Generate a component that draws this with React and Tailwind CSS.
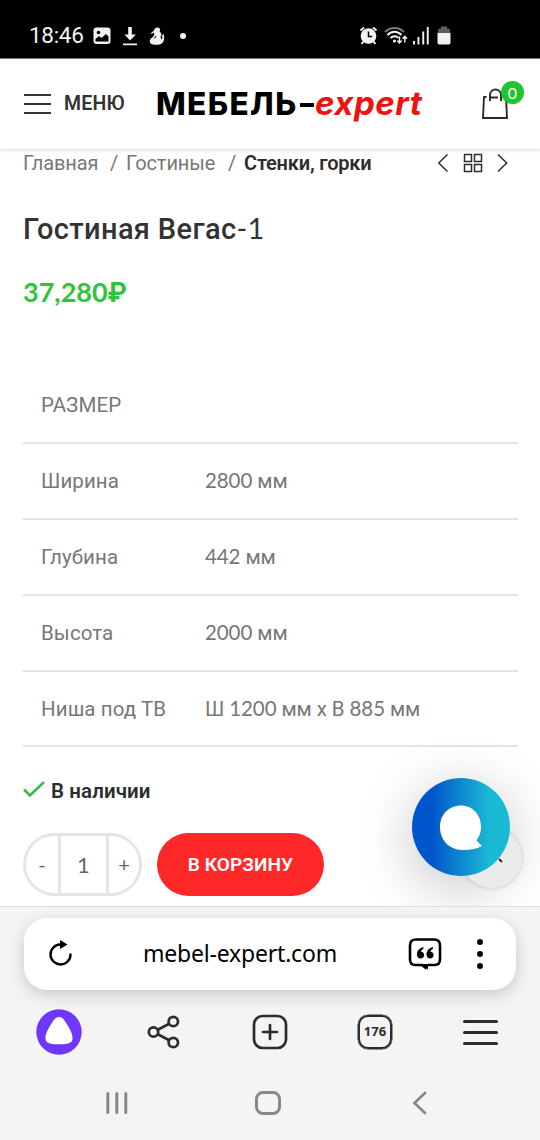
import React from 'react';

const specs = [
  { label: 'РАЗМЕР', value: '' },
  { label: 'Ширина', value: '2800 мм' },
  { label: 'Глубина', value: '442 мм' },
  { label: 'Высота', value: '2000 мм' },
  { label: 'Ниша под ТВ', value: 'Ш 1200 мм х В 885 мм' }
];

// Digits are set in Lato, Cyrillic in Roboto
const Mixed = ({ text }) =>
  text.split(/([\d,-]+)/).map((part, i) => (
    <span key={i} className={/^[\d,-]+$/.test(part) ? 'font-[Lato,sans-serif]' : ''}>
      {part}
    </span>
  ));

const StatusBar = () => (
  <div className="flex h-[58px] items-start bg-black pt-[21px] text-[#f2f2f2]">
    <span className="ml-[29px] w-[64px] text-[22.5px] leading-[28px] tracking-[-0.3px]">18:46</span>
    <svg className="mt-[6px] h-[18px] w-[18px]" viewBox="0 0 18 18">
      <rect x="0.5" y="0.5" width="17" height="16.5" rx="3" fill="#f2f2f2" />
      <circle cx="5.5" cy="5.5" r="1.8" fill="#000" />
      <path d="M2.5 12 6 9l2.5 2L13 7l2.500 2.500V14.500H2.500z" fill="#000" />
    </svg>
    <svg className="ml-[12px] mt-[6px] h-[19px] w-[14px]" viewBox="0 0 14 19" fill="#f2f2f2">
      <path d="M5.200 0h3.600v7.500h4L7 13.500 1.500 7.500h3.700zM0 16.500h14v1.700H0z" />
    </svg>
    <svg className="ml-[12px] mt-[6px] h-[18px] w-[16px]" viewBox="0 0 16 18" fill="#f2f2f2">
      <path d="M5 3.500C5.500 1 8 0 10 1c1.500.8 1.500 2.500.5 3.500L12 6c.8 1.500.5 3-.5 4l1 2.500c1-.7 1-2.500.5-4L14.500 7c1.500 4 .5 9-3 10.300-3 .8-8 1-10-1-1.500-2-.5-4.500 1.500-5.500L5.500 8l-.8-2.500L2.500 7 2 6z" />
      <path d="m7 9-1.500 2.500" stroke="#000" />
    </svg>
    <span className="ml-[15px] mt-[12px] h-[6px] w-[6px] rounded-full bg-[#f2f2f2]" />
    <svg className="ml-[173px] mt-[5px] h-[19px] w-[19px]" viewBox="0 0 19 19">
      <circle cx="9.500" cy="10" r="7.800" fill="#f2f2f2" />
      <path d="M1.500 4.500 5 1.500M17.500 4.500 14 1.500M4.500 15.500l-2 2.500M14.500 15.500l2 2.500" stroke="#f2f2f2" strokeWidth="2" />
      <path d="M9.500 5.500v5h3.700" fill="none" stroke="#000" strokeWidth="1.500" />
    </svg>
    <svg className="ml-[6px] mt-[5px] h-[19px] w-[24px]" viewBox="0 0 24 19" fill="none" strokeWidth="2">
      <path d="M1 6C6 .5 15 .5 20 6" stroke="#777" />
      <path d="M3.500 9c4-4.500 10-4.500 14 0M6.500 12c2.500-2.500 6-2.500 8 0" stroke="#f2f2f2" />
      <circle cx="10.500" cy="15" r="1.600" fill="#f2f2f2" />
      <path d="M15.500 10.500V17m-2.200-2.500 2.200 2.500 2.200-2.500M20.800 16.500V10m-2.200 2.700 2.200-2.500 2.200 2.500" stroke="#f2f2f2" strokeWidth="1.400" />
    </svg>
    <svg className="ml-[4px] mt-[5px] h-[19px] w-[18px]" viewBox="0 0 18 19" fill="#f2f2f2">
      <path d="M1 15h1.900v3.500H1zM5.500 11h1.900v7.500H5.500zM10.300 5.500h1.900v13h-1.900zM14.800 1h1.900v17.500h-1.900z" />
    </svg>
    <svg className="ml-[7px] mt-[5px] h-[19px] w-[14px]" viewBox="0 0 14 19">
      <path d="M4 .5h6v2h2l1 1.500v3.500H1V4l1-1.500h2z" fill="#5d5d5d" />
      <path d="M.5 7h13v9.500q0 2-2 2h-9q-2 0-2-2z" fill="#f2f2f2" />
    </svg>
  </div>
);

const SiteHeader = () => (
  <header className="relative flex h-[91px] items-center border-t border-[#777] bg-white shadow-[0_1px_4px_rgba(0,0,0,0.16)]">
    <div className="ml-[24px] flex w-[27px] flex-col gap-[7px]">
      <span className="h-[2px] bg-[#333]" />
      <span className="h-[2px] bg-[#333]" />
      <span className="h-[2px] bg-[#333]" />
    </div>
    <span className="ml-[13px] w-[92px] text-[19.5px] font-semibold tracking-[0.2px] text-[#333]">МЕНЮ</span>
    <div className="flex items-center whitespace-nowrap font-[Inter,sans-serif] text-[31.5px] leading-none">
      <span className="w-[144px] font-extrabold tracking-[1.4px] text-black">МЕБЕЛЬ</span>
      <span className="mr-[1px] mt-[1px] h-[4px] w-[14px] bg-black" />
      <span className="-mt-[2px] text-[33px] font-bold italic tracking-[0.5px] text-[#f0120f]">expert</span>
    </div>
    <div className="absolute left-[482px] top-[22px] h-[40px] w-[42px]">
      <svg className="h-[40px] w-[28px]" viewBox="0 0 28 40" fill="none" stroke="#2b2b2b" strokeWidth="1.900">
        <path d="M4.500 16H2L1 37h24L24 16h-2.500M8 20v-5.500c0-8 11-8 11 0V20M8 16.500h8" />
      </svg>
      <span className="absolute right-0 top-0 flex h-[23px] w-[23px] items-center justify-center rounded-full bg-[#20c52d] font-[Lato,sans-serif] text-[16px] text-white">
        0
      </span>
    </div>
  </header>
);

const Breadcrumbs = () => (
  <nav className="flex h-[28px] items-center whitespace-nowrap text-[20px] tracking-[-0.1px] text-[#777]">
    <span className="w-[87px]">Главная</span>
    <span className="w-[16px]">/</span>
    <span className="w-[102px]">Гостиные</span>
    <span className="w-[16px]">/</span>
    <span className="w-[194px] font-semibold tracking-[-0.2px] text-[#2d2d2d]">Стенки, горки</span>
    <svg className="h-[20px] w-[72px]" viewBox="0 0 72 20" fill="none" stroke="#2d2d2d" strokeWidth="1.500">
      <path d="M9.500 1.500.8 10l8.700 8.500M60 1.500l8.700 8.500-8.700 8.500" />
      <path d="M26.500 1.500h7v7h-7zM36.500 1.500h7v7h-7zM26.500 11.500h7v7h-7zM36.500 11.500h7v7h-7z" />
    </svg>
  </nav>
);

const SpecTable = () => (
  <div className="mt-[56px] w-[495px] text-[20.5px] text-[#777]">
    {specs.map((row) => (
      <div key={row.label} className="flex h-[75.9px] items-center border-b-2 border-[#e5e5e5] pl-[18px] pt-[1px]">
        <span className="w-[164px] tracking-[0.1px]">{row.label}</span>
        <span className="tracking-[-0.08px]"><Mixed text={row.value} /></span>
      </div>
    ))}
  </div>
);

const ChatWidget = () => (
  <div className="absolute left-[412px] top-[778px] h-[98px] w-[98px]">
    <div className="absolute inset-0 rounded-full shadow-[0_12px_50px_8px_rgba(0,0,0,0.17)]" />
    <div className="absolute left-[50px] top-[50px] h-[60px] w-[60px] rounded-full bg-[#ebebeb] shadow-[0_0_4px_rgba(0,0,0,0.18)]" />
    <div className="absolute inset-0 rounded-full bg-linear-to-r/srgb from-[#0055cc] from-20% to-[#1bbad4] to-80%" />
    <svg className="absolute inset-0 h-[98px] w-[98px]" viewBox="0 0 98 98">
      <path d="M49 27.500c-12 0-21 9-21 21.500C28 62 37 71.500 50 72c8 .3 15-1.200 20-4l-5.500-5.500C67 59 69 55 69 49c0-12.500-8.500-21.500-20-21.500z" fill="#fff" />
      <path d="m87 81 3 3" stroke="#222" strokeWidth="1.800" />
    </svg>
  </div>
);

const BuyRow = () => (
  <div className="mt-[28px] flex">
    <div className="flex h-[63px] w-[119px] overflow-hidden rounded-full border-[3px] border-[#e5e5e5] text-[20px] text-[#666]">
      <span className="flex w-[32px] items-center justify-center pb-[2px] font-[Lato,sans-serif]">-</span>
      <span className="flex w-[51px] items-center justify-center border-x-[3px] border-[#e5e5e5] font-[Lato,sans-serif] text-[22px]">1</span>
      <span className="flex w-[30px] items-center justify-center pb-[2px] font-[Lato,sans-serif]">+</span>
    </div>
    <button className="ml-[15px] h-[63px] w-[167px] whitespace-nowrap rounded-full bg-[#ff2828] text-[19px] font-semibold tracking-[0.1px] text-white">
      В КОРЗИНУ
    </button>
  </div>
);

const AddressBar = () => (
  <div className="mx-[24px] mt-[11px] flex h-[72px] items-center rounded-[23px] bg-white shadow-[0_5px_16px_rgba(0,0,0,0.18)]">
    <svg className="ml-[23px] h-[28px] w-[26px]" viewBox="0 0 26 28" fill="none" stroke="#000" strokeWidth="2.400">
      <path d="M13 4.500A10 10 0 1 0 23.500 14.500" strokeLinecap="round" />
      <path d="M13 0v9l7.500-4.500z" fill="#000" stroke="none" />
    </svg>
    <span className="-mt-[2px] ml-[70px] w-[265px] whitespace-nowrap font-['Noto_Sans',sans-serif] text-[23px] tracking-[-0.2px] text-black">mebel-expert.com</span>
    <svg className="h-[34px] w-[34px]" viewBox="0 0 34 34">
      <path d="M20 28h6.500q5.500 0 5.500-5.500v-14Q32 2.500 26 2.500H8Q2 2.500 2 8.500v14Q2 28 7.500 28H14l4.500 3.500" fill="none" stroke="#000" strokeWidth="2.600" />
      <path d="M14.500 27h6l-1 6z" />
      <path d="M15.500 10.300C11 11 9 14 9 17.500c0 2.500 1.500 4 3.600 4 2 0 3.500-1.500 3.500-3.500s-1.200-3.300-3.100-3.300c.3-1.500 1.200-2.500 2.500-3zM25 10.300c-4.500.7-6.500 3.700-6.500 7.200 0 2.500 1.500 4 3.600 4 2 0 3.500-1.500 3.500-3.500s-1.200-3.300-3.100-3.300c.3-1.500 1.200-2.500 2.500-3z" />
    </svg>
    <div className="ml-[35px] flex flex-col gap-[6px]">
      <span className="h-[6px] w-[6px] rounded-full bg-black" />
      <span className="h-[6px] w-[6px] rounded-full bg-black" />
      <span className="h-[6px] w-[6px] rounded-full bg-black" />
    </div>
  </div>
);

const Toolbar = () => (
  <div className="mt-[19px] flex h-[46px] items-center pl-[36px]">
    <svg className="h-[46px] w-[46px]" viewBox="0 0 46 46">
      <circle cx="23" cy="23" r="22.700" fill="#6e37fb" />
      <path d="M23 8c3 0 4.500 2 7.500 6.500 3.800 5.800 6.500 11.500 6 15.500-.5 5-7 5.300-13.500 5.300S10 35 9.500 30c-.5-4 2.200-9.700 6-15.500C18.500 10 20 8 23 8z" fill="#fff" />
    </svg>
    <svg className="ml-[65px] h-[34px] w-[34px]" viewBox="0 0 34 34" fill="none" stroke="#2d2d2d" strokeWidth="2.700">
      <circle cx="6.500" cy="17" r="4.700" />
      <circle cx="26.300" cy="6.500" r="4.700" />
      <circle cx="26.300" cy="27.500" r="4.700" />
      <path d="m10.800 14.700 11.400-6M10.800 19.300l11.400 6" />
    </svg>
    <svg className="ml-[71px] h-[36px] w-[36px]" viewBox="0 0 36 36" fill="none" stroke="#2d2d2d" strokeWidth="2.700">
      <rect x="2" y="2" width="32" height="32" rx="8.500" />
      <path d="M18 11v14M11 18h14" strokeLinecap="round" />
    </svg>
    <div className="ml-[70px] flex h-[34px] w-[34px] items-center justify-center rounded-[10px] border-[2.500px] border-[#2d2d2d] font-['Noto_Sans',sans-serif] text-[13px] font-bold text-[#2d2d2d] ring-[0.500px] ring-[#2d2d2d]">
      176
    </div>
    <div className="ml-[71px] flex w-[35px] flex-col gap-[8px]">
      <span className="h-[3px] rounded-full bg-[#2d2d2d]" />
      <span className="h-[3px] rounded-full bg-[#2d2d2d]" />
      <span className="h-[3px] rounded-full bg-[#2d2d2d]" />
    </div>
  </div>
);

const SystemNav = () => (
  <div className="mt-[35px] flex items-center pl-[106px]">
    <svg className="h-[26px] w-[22px]" viewBox="0 0 22 26" stroke="#888" strokeWidth="3" strokeLinecap="round">
      <path d="M1.800 3.500v19M10.800 3.500v19M19.800 3.500v19" />
    </svg>
    <div className="ml-[127px] h-[24px] w-[26px] rounded-[8px] border-[3px] border-[#888]" />
    <svg className="ml-[131px] h-[26px] w-[16px]" viewBox="0 0 16 26" fill="none" stroke="#888" strokeWidth="2.700" strokeLinecap="round">
      <path d="M13 3 2.500 13 13 23" />
    </svg>
  </div>
);

const App = () => (
  <div className="relative h-[1140px] w-[540px] overflow-hidden bg-white font-[Roboto,sans-serif]">
    <StatusBar />
    <SiteHeader />
    <main className="h-[757px] pl-[23px]">
      <Breadcrumbs />
      <h1 className="mt-[31px] text-[29px] font-medium leading-[40px] tracking-[0.35px] text-[#333]">
        Гостиная Вегас<span className="font-[Lato,sans-serif] font-normal">-1</span>
      </h1>
      <div className="mt-[24px] text-[27px] font-bold leading-[38px] text-[#2fc53b]">
        <Mixed text="37,280₽" />
      </div>
      <SpecTable />
      <div className="mt-[30px] flex h-[28px] items-center">
        <svg className="-mt-[3px] h-[20px] w-[22px]" viewBox="0 0 22 20" fill="none" stroke="#36bd43" strokeWidth="2.500">
          <path d="m1 9.500 6 6L21 2" />
        </svg>
        <span className="ml-[6px] whitespace-nowrap text-[20.5px] font-semibold tracking-[0.1px] text-[#2d2d2d]">В наличии</span>
      </div>
      <BuyRow />
    </main>
    <ChatWidget />
    <footer className="relative h-[234px] border-t border-[#ddd] bg-[#f4f4f4]">
      <AddressBar />
      <Toolbar />
      <SystemNav />
    </footer>
  </div>
);

export default App;
